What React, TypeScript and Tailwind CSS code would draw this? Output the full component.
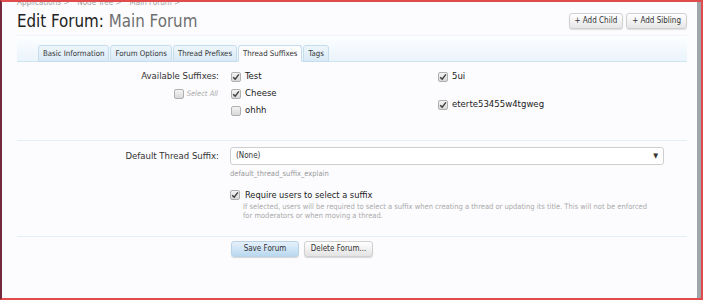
import type { ReactNode } from 'react';

const FONT = "font-['DejaVu_Sans_Condensed','Liberation_Sans',sans-serif]";

function Box({ checked }: { checked?: boolean }) {
  return (
    <span className="relative inline-flex h-[10px] w-[10px] shrink-0 items-center justify-center rounded-[2px] border border-[#b0b0b0] bg-gradient-to-b from-[#f4f4f4] to-[#d8d8d8]">
      {checked && (
        <svg viewBox="0 0 10 10" className="h-[8px] w-[8px]">
          <path d="M1.5 5.2 L4 7.8 L8.6 1.8" fill="none" stroke="#3a3a3a" strokeWidth="1.7" />
        </svg>
      )}
    </span>
  );
}

function Option({ checked, children }: { checked?: boolean; children: ReactNode }) {
  return (
    <div className="flex h-[17px] items-center gap-[4px] text-[9.5px] text-[#222]">
      <Box checked={checked} />
      <span>{children}</span>
    </div>
  );
}

const TABS = ['Basic Information', 'Forum Options', 'Thread Prefixes', 'Thread Suffixes', 'Tags'];

export default function App() {
  return (
    <div className={`relative h-[300px] w-[703px] overflow-hidden border-y-2 border-r-2 border-l-2 border-y-[#e14b4b] border-r-[#e14b4b] border-l-[#74283b] bg-[#fcfcfe] ${FONT}`}>
      <div className="absolute bottom-0 left-[-2px] h-[34px] w-[2px] bg-[#e14b4b]" />
      <div className="flex h-full">
        <div className="flex-1 pl-[15px] pr-[10px]">
          {/* breadcrumb */}
          <div className="-mt-[5px] flex gap-[8px] text-[8px] leading-[11px] text-[#a0a0a0]">
            <span>Applications &gt;</span>
            <span>Node Tree &gt;</span>
            <span>Main Forum &gt;</span>
          </div>

          {/* title row */}
          <div className="mt-[3px] flex h-[20px] items-center justify-between">
            <h1 className="text-[16.8px] leading-[20px] text-[#222]">
              Edit Forum: <span className="text-[#6f6f6f]">Main Forum</span>
            </h1>
            <div className="flex gap-[3px]">
              <button className="h-[16px] rounded-[3px] border border-[#d0d0d0] bg-gradient-to-b from-white to-[#e6e6e6] px-[5px] text-[8px] text-[#333] shadow-[0_1px_1px_rgba(0,0,0,0.12)]">
                + Add Child
              </button>
              <button className="h-[16px] rounded-[3px] border border-[#d0d0d0] bg-gradient-to-b from-white to-[#e6e6e6] px-[5px] text-[8px] text-[#333] shadow-[0_1px_1px_rgba(0,0,0,0.12)]">
                + Add Sibling
              </button>
            </div>
          </div>

          {/* tabs */}
          <div className="mt-[4px] flex h-[27px] items-end border-t border-b border-t-[#f0f4f8] border-b-[#cfe5f2] bg-gradient-to-b from-[#fdfeff] to-[#eaf4fb] pl-[21px]">
            {TABS.map((t) => (
              <div
                key={t}
                className={`-mb-px mr-[1px] flex h-[17px] items-center rounded-t-[3px] border border-[#c5dded] px-[4px] text-[7.8px] text-[#333] ${
                  t === 'Thread Suffixes'
                    ? 'border-b-[#fcfcfe] bg-[#fcfcfe]'
                    : 'bg-gradient-to-b from-[#eef6fc] to-[#d9eaf6]'
                }`}
              >
                {t}
              </div>
            ))}
          </div>

          {/* available suffixes */}
          <div className="flex h-[79px] border-b border-[#e3f0f6] pt-[6px]">
            <div className="flex w-[202px] flex-col items-end">
              <div className="flex h-[17px] items-center text-[9.5px] text-[#333]">Available Suffixes:</div>
              <div className="mr-[1px] flex h-[17px] items-center gap-[3px] text-[7.5px] italic text-[#aaa]">
                <Box />
                <span>Select All</span>
              </div>
            </div>
            <div className="ml-[12px] w-[207px]">
              <Option checked>Test</Option>
              <Option checked>Cheese</Option>
              <Option>ohhh</Option>
            </div>
            <div>
              <Option checked>5ui</Option>
              <div className="mt-[11px]">
                <Option checked>eterte53455w4tgweg</Option>
              </div>
            </div>
          </div>

          {/* default suffix */}
          <div className="flex h-[96px] border-b border-[#e3f0f6] pt-[6px]">
            <div className="flex w-[202px] justify-end">
              <div className="flex h-[18px] items-center text-[9.5px] text-[#333]">Default Thread Suffix:</div>
            </div>
            <div className="ml-[11px] flex-1 pr-[23px]">
              <div className="flex h-[18px] items-center justify-between rounded-[3px] border border-[#cfcfcf] bg-white pl-[5px] pr-[5px] text-[8px] text-[#333]">
                <span>(None)</span>
                <span className="text-[7px]">▼</span>
              </div>
              <div className="mt-[3px] text-[7.5px] text-[#999]">default_thread_suffix_explain</div>
              <div className="mt-[9px] flex items-center gap-[5px] text-[9.2px] text-[#222]">
                <Box checked />
                <span>Require users to select a suffix</span>
              </div>
              <div className="whitespace-nowrap pl-[13px] text-[7.5px] leading-[9px] text-[#aaa]">
                If selected, users will be required to select a suffix when creating a thread or updating its title. This will not be enforced
                <br />
                for moderators or when moving a thread.
              </div>
            </div>
          </div>

          {/* buttons */}
          <div className="flex gap-[5px] pl-[214px] pt-[4px]">
            <button className="h-[16px] w-[68px] rounded-[3px] border border-[#b9d3e6] bg-gradient-to-b from-[#e6f1fa] to-[#b9d8ef] text-[8px] text-[#333] shadow-[0_1px_1px_rgba(0,0,0,0.15)]">
              Save Forum
            </button>
            <button className="h-[16px] w-[69px] rounded-[3px] border border-[#d0d0d0] bg-gradient-to-b from-white to-[#e3e3e3] text-[8px] text-[#333] shadow-[0_1px_1px_rgba(0,0,0,0.15)]">
              Delete Forum...
            </button>
          </div>
        </div>
        <div className="w-[4px] bg-[#9ea6aa]" />
      </div>
    </div>
  );
}
